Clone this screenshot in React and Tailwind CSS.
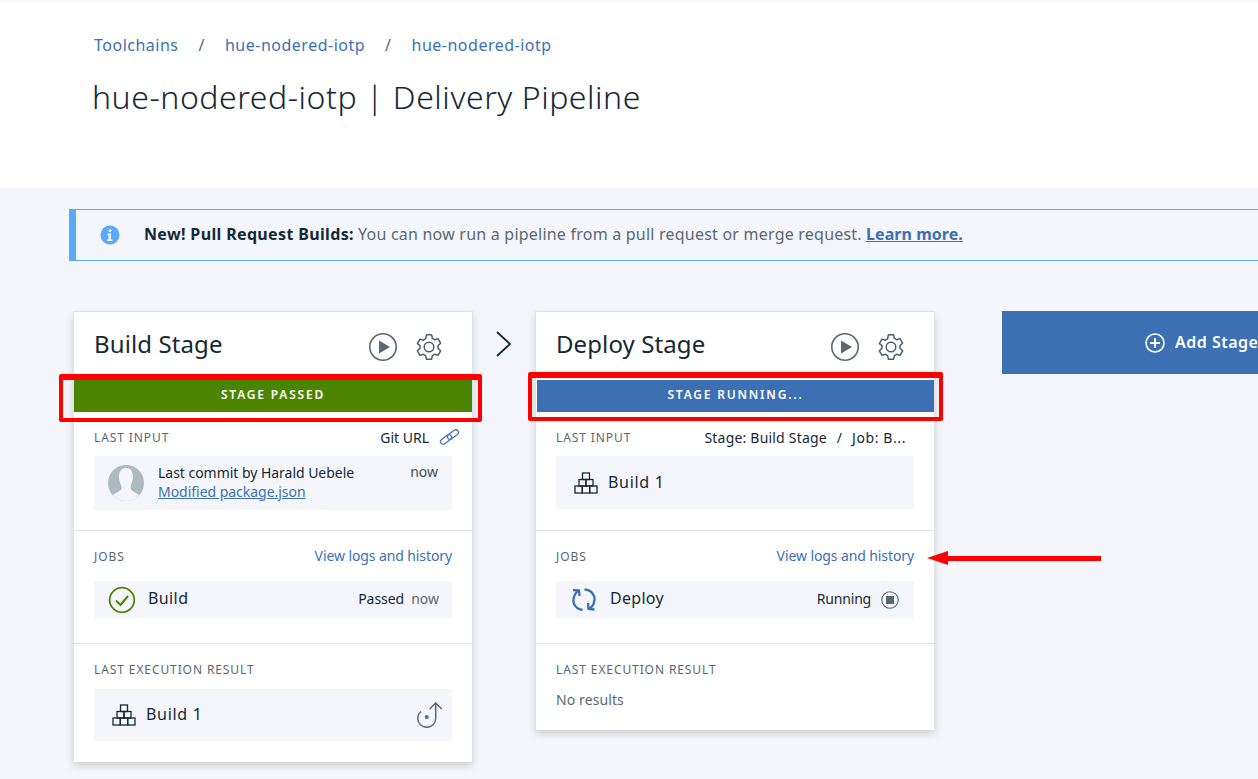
import React from "react";

function PlayIcon() {
  return (
    <svg width="30" height="30" viewBox="0 0 30 30" fill="none">
      <circle cx="15" cy="15" r="13.2" stroke="#5a6872" strokeWidth="1.6" />
      <path d="M11 8.500 L22 15 L11 21.500 Z" fill="#5a6872" />
    </svg>
  );
}

function GearIcon() {
  return (
    <svg width="28" height="28" viewBox="0 0 28 28" fill="none" stroke="#4a5d68" strokeWidth="1.5" strokeLinejoin="round">
      <path d="M11.400 1.800h5.200l.8 3.600 2.200 1.300 3.400-1.100 2.600 4.600-2.600 2.500v2.600l2.600 2.500-2.600 4.600-3.400-1.100-2.200 1.300-.8 3.600h-5.200l-.8-3.600-2.200-1.300-3.400 1.100-2.600-4.600 2.600-2.500v-2.600L2.400 10.700 5 6.100l3.400 1.100 2.200-1.300z" />
      <circle cx="14" cy="14" r="4.800" />
    </svg>
  );
}

function LinkIcon() {
  return (
    <svg width="21" height="16" viewBox="0 0 21 16" fill="none" stroke="#3d70b2" strokeWidth="1.2">
      <g transform="rotate(-36 10.500 8)">
        <rect x="0" y="5.300" width="12.500" height="5.400" rx="2.700" />
        <rect x="8.500" y="5.300" width="12.500" height="5.400" rx="2.700" />
      </g>
    </svg>
  );
}

function BoxesIcon() {
  return (
    <svg width="24" height="22" viewBox="0 0 24 22" fill="none" stroke="#152935" strokeWidth="1.3">
      <rect x="8.500" y="1" width="7" height="6.500" />
      <rect x="5" y="7.500" width="7" height="6.500" />
      <rect x="12" y="7.500" width="7" height="6.500" />
      <rect x="1" y="14" width="7.300" height="7" />
      <rect x="8.300" y="14" width="7.400" height="7" />
      <rect x="15.700" y="14" width="7.300" height="7" />
    </svg>
  );
}

function CheckIcon() {
  return (
    <svg width="28" height="28" viewBox="0 0 28 28" fill="none" stroke="#4b8400">
      <circle cx="14" cy="14" r="12.300" strokeWidth="1.700" />
      <path d="M8 14.500 L12.500 19 L20 10" strokeWidth="2" />
    </svg>
  );
}

function SpinIcon() {
  return (
    <svg width="24" height="24" viewBox="0 0 24 24" fill="none" stroke="#3d70b2" strokeWidth="2.300">
      <path d="M10.500 22 C3 21 1 15 1.500 11.500 C2 7 4 4 7 2.500" />
      <path d="M1 2 L7 2.500 L7.500 8" />
      <path d="M12.500 1.500 C20 2 23 8 22.500 12 C22 16 20 19.500 16.500 21" />
      <path d="M22.500 21.500 L16.500 21 L16 15" />
    </svg>
  );
}

function StopIcon() {
  return (
    <svg width="18" height="18" viewBox="0 0 18 18" fill="none">
      <circle cx="9" cy="9" r="8.200" stroke="#5a6872" strokeWidth="1.100" />
      <rect x="5" y="5" width="8" height="8" fill="#5a6872" />
    </svg>
  );
}

function RedeployIcon() {
  return (
    <svg width="26" height="26" viewBox="0 0 26 26" fill="none" stroke="#5a6872" strokeWidth="1.500">
      <path d="M4 9.500 C1.800 11 .8 14 .8 16.500 C.8 21.500 5 25.300 9.700 25.300 C14.700 25.300 18.700 21.500 18.700 16.500 L18.700 1" />
      <path d="M12.700 7 L18.700 1 L24.700 7" />
      <circle cx="9.700" cy="15" r="2" fill="#5a6872" stroke="none" />
    </svg>
  );
}

function Avatar() {
  return (
    <svg width="36" height="36" viewBox="0 0 36 36">
      <circle cx="18" cy="18" r="18" fill="#aeb9c0" />
      <path d="M18 3 C12.500 3 10.500 8 11 13 C11.500 18 13.500 20 13.500 23 C13.500 26 8 27.500 5 30 C8 34 13 36 18 36 C23 36 28 34 31 30 C28 27.500 22.500 26 22.500 23 C22.500 20 24.500 18 25 13 C25.500 8 23.500 3 18 3 Z" fill="#f4f6fb" />
    </svg>
  );
}

function SectionHead({ label, children }) {
  return (
    <div className="flex items-center justify-between h-[18px]">
      <span className="text-[12px] tracking-[0.9px] text-[#5a6872] pt-[2px]">{label}</span>
      {children}
    </div>
  );
}

function Logs() {
  return <a className="text-[14px] text-[#3d70b2] tracking-[-0.1px] pb-[2px]">View logs and history</a>;
}

function Box({ className, children }) {
  return <div className={`bg-[#f4f6fb] flex items-center ${className}`}>{children}</div>;
}

function Card({ title, status, statusColor, input, job, result }) {
  return (
    <div className="w-[400px] shrink-0 bg-white border border-[#dfe3e6] border-b-0 shadow-[0_4px_8px_rgba(0,0,0,0.15)]">
      <div className="h-[68px] flex items-start pl-[20px] pr-[29px]">
        <h2 className="text-[24px] leading-[32px] mt-[16px] text-[#152935] tracking-[0.1px]">{title}</h2>
        <div className="ml-auto flex items-center gap-[17px] mt-[20px]">
          <PlayIcon />
          <GearIcon />
        </div>
      </div>
      <div className={`h-[32px] flex items-center justify-center pb-[2px] text-white text-[12px] font-semibold tracking-[1.8px] ${statusColor}`}>
        {status}
      </div>
      <div className="px-[20px] pt-[16px] pb-[20px]">
        <SectionHead label="LAST INPUT">{input.head}</SectionHead>
        <div className="mt-[10px]">{input.body}</div>
      </div>
      <div className="border-t border-[#dfe3e6] px-[20px] pt-[16px] pb-[25px]">
        <SectionHead label="JOBS">
          <Logs />
        </SectionHead>
        <div className="mt-[16px]">{job}</div>
      </div>
      <div className="border-t border-[#dfe3e6] px-[20px] pt-[16px] pb-[21px]">
        <SectionHead label="LAST EXECUTION RESULT" />
        <div className="mt-[11px]">{result}</div>
      </div>
    </div>
  );
}

export default function App() {
  return (
    <div className="relative w-full h-[779px] overflow-hidden bg-[#f4f6fb] font-['Noto_Sans',sans-serif] text-[#152935]">
      <header className="h-[188px] bg-white border-t-[3px] border-[#f9f9f9] pl-[92px]">
        <nav className="flex items-center text-[16px] leading-[20px] mt-[32px] pl-[2px] text-[#3d70b2] tracking-[0.5px]">
          <a>Toolchains</a>
          <span className="mx-[20px] text-[#5a6872]">/</span>
          <a>hue-nodered-iotp</a>
          <span className="mx-[20px] text-[#5a6872]">/</span>
          <a>hue-nodered-iotp</a>
        </nav>
        <h1 className="text-[32px] leading-[44px] mt-[20px] font-light tracking-[0.55px]">hue-nodered-iotp | Delivery Pipeline</h1>
      </header>

      <div className="ml-[69px] mt-[21px] w-[1300px] h-[52px] flex items-center border border-l-[7px] border-[#5aaafa] pl-[24px] text-[16px]">
        <svg width="20" height="20" viewBox="0 0 20 20" className="shrink-0">
          <circle cx="10" cy="10" r="9.500" fill="#5aaafa" />
          <circle cx="10" cy="5.500" r="1.500" fill="#f4f6fb" />
          <path d="M7.500 8.500h3.500v6h1.500v1.500h-5.500v-1.500h1.500v-4.500h-1z" fill="#f4f6fb" />
        </svg>
        <p className="ml-[24px] pb-[2px] whitespace-nowrap">
          <b className="font-bold tracking-[0.35px]">New! Pull Request Builds:</b>{" "}
          <span className="text-[#5a6872] tracking-[0.22px]">You can now run a pipeline from a pull request or merge request.</span>{" "}
          <a className="font-bold text-[#3d70b2] underline tracking-[0.05px]">Learn more.</a>
        </p>
      </div>

      <div className="flex items-start pl-[73px] mt-[50px]">
        <Card
          title="Build Stage"
          status="STAGE PASSED"
          statusColor="bg-[#4b8400]"
          input={{
            head: (
              <span className="flex items-center gap-[10px] mr-[-8px] text-[14px]">
                Git URL <LinkIcon />
              </span>
            ),
            body: (
              <Box className="h-[54px] pl-[14px] pr-[14px]">
                <Avatar />
                <div className="ml-[14px] mb-[3px] text-[14px] leading-[19px] tracking-[-0.03px]">
                  <div>Last commit by Harald Uebele</div>
                  <a className="text-[#3d70b2] underline">Modified package.json</a>
                </div>
                <span className="ml-auto self-start mt-[5px] text-[14px] text-[#3d4f5a]">now</span>
              </Box>
            ),
          }}
          job={
            <Box className="h-[37px] pl-[14px] pr-[13px]">
              <CheckIcon />
              <span className="ml-[12px] mb-[3px] text-[16px] tracking-[0.4px]">Build</span>
              <span className="ml-auto mb-[3px] text-[14px] tracking-[-0.05px]">Passed</span>
              <span className="ml-[7px] mb-[3px] text-[14px] text-[#5a6872]">now</span>
            </Box>
          }
          result={
            <Box className="h-[52px] pl-[18px] pr-[9px]">
              <BoxesIcon />
              <span className="ml-[10px] mb-[2px] text-[16px] tracking-[0.7px]">Build 1</span>
              <span className="ml-auto">
                <RedeployIcon />
              </span>
            </Box>
          }
        />

        <div className="w-[62px] shrink-0 flex justify-center pt-[20px]">
          <svg width="18" height="26" viewBox="0 0 18 26" fill="none" stroke="#152935" strokeWidth="1.800">
            <path d="M2 1 L15 13 L2 25" />
          </svg>
        </div>

        <Card
          title="Deploy Stage"
          status="STAGE RUNNING..."
          statusColor="bg-[#3d70b2] ml-[1px]"
          input={{
            head: (
              <span className="flex text-[14px] mr-[8px] whitespace-nowrap">
                <span className="tracking-[0.2px]">Stage: Build Stage</span>
                <span className="mx-[10px]">/</span>
                <span className="tracking-[0.6px]">Job: B...</span>
              </span>
            ),
            body: (
              <Box className="h-[53px] mb-[1px] pl-[18px]">
                <BoxesIcon />
                <span className="ml-[10px] mb-[2px] text-[16px] tracking-[0.7px]">Build 1</span>
              </Box>
            ),
          }}
          job={
            <Box className="h-[37px] pl-[16px] pr-[15px]">
              <SpinIcon />
              <span className="ml-[14px] mb-[3px] text-[16px] tracking-[0.3px]">Deploy</span>
              <span className="ml-auto mb-[3px] mr-[1px] text-[14px] tracking-[-0.2px]">Running</span>
              <span className="ml-[9px]">
                <StopIcon />
              </span>
            </Box>
          }
          result={<div className="h-[21px] text-[14px] text-[#5a6872] leading-[21px] mb-[-1px] tracking-[0.1px]">No results</div>}
        />

        <button className="ml-[67px] w-[300px] h-[63px] shrink-0 bg-[#3d70b2] flex items-center pl-[143px] text-white text-[16px] font-semibold">
          <svg width="20" height="20" viewBox="0 0 20 20" fill="none" stroke="white" strokeWidth="1.600" className="shrink-0">
            <circle cx="10" cy="10" r="9" />
            <path d="M10 5v10M5 10h10" strokeWidth="2" />
          </svg>
          <span className="ml-[10px] mb-[2px] whitespace-nowrap tracking-[0.5px]">Add Stage</span>
        </button>
      </div>

      {/* red annotations */}
      <div className="absolute left-[59px] top-[374px] w-[423px] h-[48px] border-[4px] border-t-[6px] border-[#ff0000] rounded-[2px]" />
      <div className="absolute left-[528px] top-[372px] w-[415px] h-[49px] border-[4px] border-t-[6px] border-[#ff0000] rounded-[2px]" />
      <svg className="absolute left-[925px] top-[548px]" width="180" height="20" viewBox="0 0 180 20">
        <path d="M176 10.500 L22 10.500" stroke="#ff0000" strokeWidth="5" />
        <path d="M2 10 L23 3 L23 17 Z" fill="#ff0000" />
      </svg>
    </div>
  );
}
